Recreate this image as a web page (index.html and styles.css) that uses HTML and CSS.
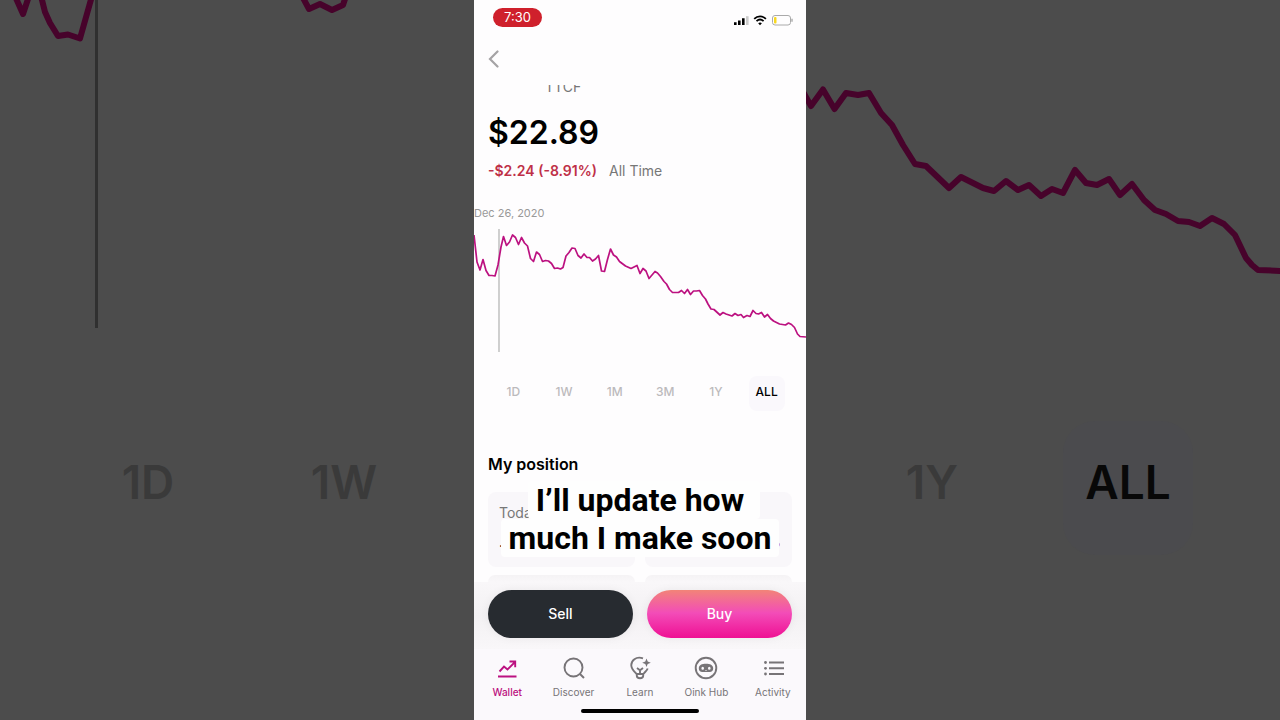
FILE: index.html
```html
<!DOCTYPE html>
<html lang="en">
<head>
<meta charset="utf-8">
<meta name="viewport" content="width=device-width, initial-scale=1">
<title>TTCF</title>
<link rel="stylesheet" href="styles.css">
</head>
<body>
<div class="stage">
  <aside class="backdrop backdrop-left" aria-hidden="true">
    <svg class="backdrop-chart" viewBox="0 0 474 360">
      <path class="backdrop-marker" d="M96.500 0V328"/>
      <path class="backdrop-line" d="M15-4 23 14 29-4M41-4 45 12 50 23 58 36 68 34.500 80 38.500 92-4M302-4 309 9 320 4 332 10 343 5 346-4"/>
    </svg>
    <div class="backdrop-ranges"><span>1D</span><span>1W</span></div>
  </aside>

  <main class="phone">
    <div class="status">
      <span class="clock">7:30</span>
      <svg class="status-icons" viewBox="0 0 60 12" aria-hidden="true">
        <path d="M1 8.200h2.600V11H1zM5 6.500h2.600V11H5zM9 4.300h2.600V11H9z"/>
        <path class="faint" d="M13 2.200h2.600V11H13z"/>
        <path class="wifi" d="M21.200 4.900c3.300-3.300 8.400-3.300 11.700 0M23.500 7.200c2.100-2 5-2 7.100 0"/>
        <path d="M25.200 9.200c1.100-.9 2.600-.9 3.700 0L27 11.200z"/>
        <rect class="battery" x="39.500" y="1.500" width="18" height="9.500" rx="2.500"/>
        <path class="tip" d="M59 4.800v3"/>
        <rect class="charge" x="41" y="3" width="2.500" height="6.500" rx="1"/>
      </svg>
    </div>
    <header class="nav">
      <button class="back" type="button" aria-label="Back">
        <svg viewBox="0 0 12 18" aria-hidden="true"><path d="M9.500 1.500 2 9l7.500 7.500"/></svg>
      </button>
    </header>

    <div class="ticker">TTCF</div>
    <h1 class="price">$22.89</h1>
    <p class="change"><strong>-$2.24 (-8.91%)</strong><span>All Time</span></p>
    <p class="date">Dec 26, 2020</p>
    <svg class="chart" viewBox="0 24 332 132" role="img" aria-label="Price, all time">
      <path class="marker" d="M25 29V152"/>
      <path class="line" d="M0 35 3 62 6 70 9 59.500 12 70.500 15 75.500 18 75.500 21 76 24 65 27 47 29.500 36.500 32.500 45.500 35.500 42 38.500 35 41.500 37.500 44.500 44.500 47.500 37.500 50.500 43 53.500 46 56.500 58.500 59.500 61.500 62.500 52 65.500 54.500 68.500 61.500 71.500 60.500 74.500 61 77.500 63.500 80.500 68.500 83.500 68 86.500 69 89 67.500 92 56 95 52.500 98 48 101 48.500 104 55.500 107 58 110 54 113 57.500 115.500 57.500 118.500 61 121.500 59 124.500 55.500 127.500 71 130.500 71.500 133.500 59.500 136.500 49 139.500 55 142.500 57 145.500 61.500 151.500 66 157 68.500 163 65.500 166 73.500 169 68.500 172 71 175 78.500 178 75 181 71.500 183.500 73 186.500 76.500 190 81.500 192.500 84 195.500 89.500 198.500 92.500 204.500 92.500 207.500 90.500 210.500 93.500 213.500 89.500 216.500 94.500 219.500 91 222.500 91 225.500 90.500 228.500 95.500 231.500 99 234 104 237 109 240 109.500 246 115 249 112.500 252 114 258 116 261 113.500 264 115.500 267 114.500 269.500 117.500 273 115.500 276 116.500 279 110.500 282 113.500 284.500 114 287.500 112.500 290.500 117 293.500 114.500 296.500 118.500 299.500 121 305.500 124 311.500 125 314.500 123 317.500 124.500 320.500 127.500 323.500 134 326 136.500 332 137"/>
    </svg>

    <div class="ranges">
      <button type="button">1D</button>
      <button type="button">1W</button>
      <button type="button">1M</button>
      <button type="button">3M</button>
      <button type="button">1Y</button>
      <button type="button" class="active" aria-pressed="true">ALL</button>
    </div>

    <h2 class="section-title">My position</h2>
    <section class="position">
      <div class="card"><span class="card-label">Today</span><span class="card-value">.</span></div>
      <div class="card card-right"><span class="card-label"></span><span class="card-value loss">%</span></div>
      <div class="card-peek"></div>
      <div class="card-peek"></div>
      <p class="caption"><span class="caption-first">I’ll update how</span><span>much I make soon</span></p>
    </section>

    <div class="actions">
      <button type="button" class="sell">Sell</button>
      <button type="button" class="buy">Buy</button>
    </div>

    <footer class="dock">
      <nav class="tabs">
        <a href="#wallet" class="current">
          <svg viewBox="0 0 24 24" aria-hidden="true"><path d="M3 20.500h18.500M4.500 15.500 9 10.500l3.500 3 7-7M14.500 5.500h5.700v5.700"/></svg>
          <span>Wallet</span>
        </a>
        <a href="#discover">
          <svg viewBox="0 0 24 24" aria-hidden="true"><circle cx="11.500" cy="11.500" r="9"/><path d="m18 18 4 4"/></svg>
          <span>Discover</span>
        </a>
        <a href="#learn">
          <svg viewBox="0 0 24 24" aria-hidden="true"><path d="M15 2.300C8 0 3 4.500 3.300 9.500c.2 4 3 6 5.300 8.500h6.800c1.500-2 3.400-3.300 4.300-5.500M8.800 18v1.800c0 1.800 1.200 2.400 3.200 2.400s3.200-.6 3.200-2.400V18M9 12l3 2.200 3-2.200M12 14.200V18"/><path class="solid" d="m18.500 2.500 1.200 3.100 3.100 1.200-3.100 1.200-1.200 3.100-1.200-3.100-3.100-1.200 3.100-1.200z"/></svg>
          <span>Learn</span>
        </a>
        <a href="#oink">
          <svg viewBox="0 0 24 24" aria-hidden="true"><circle cx="12" cy="12" r="10.300"/><path class="solid" fill-rule="evenodd" d="M4.800 12.500C4.800 9 8 7.700 12 7.700s7.200 1.300 7.200 4.800c0 2.200-1.300 3.500-3.500 3.500H8.300c-2.200 0-3.500-1.300-3.500-3.500zM8.700 10.800a1.300 1.500 0 1 0 0 3 1.300 1.500 0 0 0 0-3zM15.300 10.800a1.300 1.500 0 1 0 0 3 1.300 1.500 0 0 0 0-3zM11 14.900h2l-1-.9z"/></svg>
          <span>Oink Hub</span>
        </a>
        <a href="#activity">
          <svg viewBox="0 0 24 24" aria-hidden="true"><path d="M8 6.500h15M8 12.300h15M8 18h15"/><g class="solid"><circle cx="4.500" cy="6.500" r="1.400"/><circle cx="4.500" cy="12.300" r="1.400"/><circle cx="4.500" cy="18" r="1.400"/></g></svg>
          <span>Activity</span>
        </a>
      </nav>
      <div class="home-bar"></div>
    </footer>
  </main>

  <aside class="backdrop backdrop-right" aria-hidden="true">
    <svg class="backdrop-chart" viewBox="0 0 474 360">
      <path class="backdrop-line" d="M-4 90 5 106 17 89.500 28.500 109 40 93 52 95 63 93 75 113 86 125 97 145 109 164 120 166 143 188 155 177 177 188 188 191 200 181 212 190 223 185 235 196 246 189 257 193 269 170 280 183 291 185 303 179 314 195 326 184 338 200 349 210 360 214 372 221 383 222 394 226 406 218 418 224 429 235 440 258 446 265 452 270 476 271"/>
    </svg>
    <div class="backdrop-ranges"><span>1Y</span><span class="active">ALL</span></div>
  </aside>
</div>
</body>
</html>
```

FILE: styles.css
```css
* {
  box-sizing: border-box;
}

body {
  margin: 0;
  background: #4c4c4c;
  font-family: Inter, "Liberation Sans", sans-serif;
  color: #000;
}

h1, h2, p {
  margin: 0;
}

button {
  border: 0;
  padding: 0;
  background: none;
  font: inherit;
  cursor: pointer;
}

.stage {
  display: grid;
  grid-template-columns: minmax(0, 1fr) 332px minmax(0, 1fr);
  min-height: 100vh;
}

/* Enlarged, dimmed chart either side of the phone */
.backdrop {
  overflow: hidden;
  background: #4c4c4c;
}

.backdrop-chart {
  display: block;
  width: 100%;
  fill: none;
}

.backdrop-line {
  stroke: #47032b;
  stroke-width: 6;
  stroke-linejoin: round;
}

.backdrop-marker {
  stroke: #303030;
  stroke-width: 3;
}

.backdrop-ranges {
  display: grid;
  grid-template-columns: 196px 196px;
  justify-items: center;
  margin-top: 61px;
  padding-left: 50px;
  font-size: 46px;
  font-weight: 600;
  line-height: 122px;
  color: #3a3a3a;
}

.backdrop-right .backdrop-ranges {
  padding-left: 28px;
}

.backdrop-ranges span {
  width: 130px;
  padding-bottom: 12px;
  border-radius: 32px;
  text-align: center;
}

.backdrop-ranges .active {
  background: #4b4b4e;
  color: #080808;
}

.phone {
  display: flex;
  flex-direction: column;
  background: #fefdfe;
}

.status {
  display: flex;
  justify-content: space-between;
  align-items: flex-start;
  height: 36px;
  padding: 8px 13px 0 19px;
}

.clock {
  width: 49px;
  border-radius: 10px;
  background: #cf202c;
  color: #fff;
  font-size: 13px;
  line-height: 19px;
  text-align: center;
}

.status-icons {
  width: 60px;
  height: 12px;
  margin-top: 6px;
}

.faint {
  fill: #ccc;
}

.wifi {
  fill: none;
  stroke: #000;
  stroke-width: 1.8;
}

.battery {
  fill: none;
  stroke: #aaa;
}

.tip {
  stroke: #aaa;
  stroke-width: 1.4;
}

.charge {
  fill: #f8d820;
}

.nav {
  height: 49px;
  padding: 14px 14px 0;
}

.back {
  display: block;
}

.back svg {
  display: block;
  width: 12px;
  height: 18px;
  fill: none;
  stroke: #a5a3a5;
  stroke-width: 2.2;
  stroke-linecap: round;
}

.ticker {
  display: flex;
  align-items: flex-end;
  height: 9px;
  padding-left: 71px;
  overflow: hidden;
  font-size: 14px;
  line-height: 14px;
  color: #777;
}

.price {
  margin-top: 19px;
  padding: 0 14px;
  font-size: 32px;
  font-weight: 600;
  line-height: 40px;
}

.change {
  display: flex;
  gap: 12px;
  margin-top: 8px;
  padding: 0 14px;
  font-size: 14px;
  line-height: 20px;
  color: #777;
}

.change strong {
  font-weight: 600;
  color: #bf3048;
}

.date {
  margin-top: 24px;
  font-size: 11px;
  line-height: 16px;
  color: #999;
}

.chart {
  display: block;
  width: 100%;
  margin-top: 3px;
  fill: none;
}

.line {
  stroke: #bc1180;
  stroke-width: 1.7;
  stroke-linejoin: round;
}

.marker {
  stroke: #c4c4c4;
  stroke-width: 1.6;
}

.ranges {
  display: grid;
  grid-template-columns: repeat(6, 1fr);
  justify-items: center;
  margin-top: 20px;
  padding: 0 14px;
  font-size: 12px;
  font-weight: 500;
  line-height: 32px;
}

.ranges button {
  width: 36px;
  padding-bottom: 3px;
  border-radius: 8px;
  color: #bcbabc;
}

.ranges .active {
  background: #faf8fc;
  color: #000;
}

.section-title {
  margin-top: 41px;
  padding: 0 14px;
  font-size: 16px;
  font-weight: 600;
  line-height: 24px;
}

.position {
  position: relative;
  display: grid;
  grid-template-columns: 1fr 1fr;
  gap: 8px 10px;
  margin-top: 16px;
  padding: 0 14px;
}

.card {
  display: flex;
  flex-direction: column;
  gap: 9px;
  height: 75px;
  padding: 11px;
  border-radius: 8px;
  background: #f9f7fa;
  font-size: 14px;
  line-height: 20px;
}

.card-label {
  min-height: 20px;
  color: #777;
}

.card-right {
  align-items: flex-end;
}

.loss {
  color: #bf3048;
}

.card-peek {
  height: 7px;
  border-radius: 8px 8px 0 0;
  background: linear-gradient(#f5f3f5, #f9f7f9);
}

/* Video caption lying over the cards */
.caption {
  position: absolute;
  top: -11px;
  left: 0;
  right: 0;
  display: flex;
  flex-direction: column;
  align-items: center;
  font-family: Roboto, sans-serif;
  font-size: 32px;
  font-weight: 700;
  line-height: 38px;
  white-space: nowrap;
}

.caption span {
  padding: 0 8px;
  border-radius: 4px;
  background: #fefefe;
}

.caption .caption-first {
  margin-right: -8px;
  padding-right: 16px;
}

.actions {
  display: grid;
  grid-template-columns: 1fr 1fr;
  gap: 14px;
  padding: 8px 14px 11px;
  background: linear-gradient(#f9f7f9, #f3f1f3 50%, #f9f7f9);
}

.actions button {
  border-radius: 24px;
  color: #fff;
  font-size: 14px;
  font-weight: 500;
  line-height: 48px;
  box-shadow: 0 0 10px rgba(0, 0, 0, 0.06);
}

.sell {
  background: #272b30;
}

.buy {
  background: linear-gradient(#f28478, #f34cb8 48%, #ef1093);
}

.dock {
  flex: 1;
  background: #fbf9fc;
}

.tabs {
  display: grid;
  grid-template-columns: repeat(5, 1fr);
  padding-top: 7px;
}

.tabs a {
  display: flex;
  flex-direction: column;
  align-items: center;
  gap: 5px;
  color: #777477;
  font-size: 10px;
  line-height: 14px;
  text-decoration: none;
}

.tabs .current {
  color: #bc1180;
  font-weight: 500;
}

.tabs svg {
  width: 24px;
  height: 24px;
  fill: none;
  stroke: currentColor;
  stroke-width: 1.9;
}

.tabs .solid {
  fill: currentColor;
  stroke: none;
}

.home-bar {
  width: 118px;
  height: 4px;
  margin: 10px auto 7px;
  border-radius: 2px;
  background: #000;
}
```
